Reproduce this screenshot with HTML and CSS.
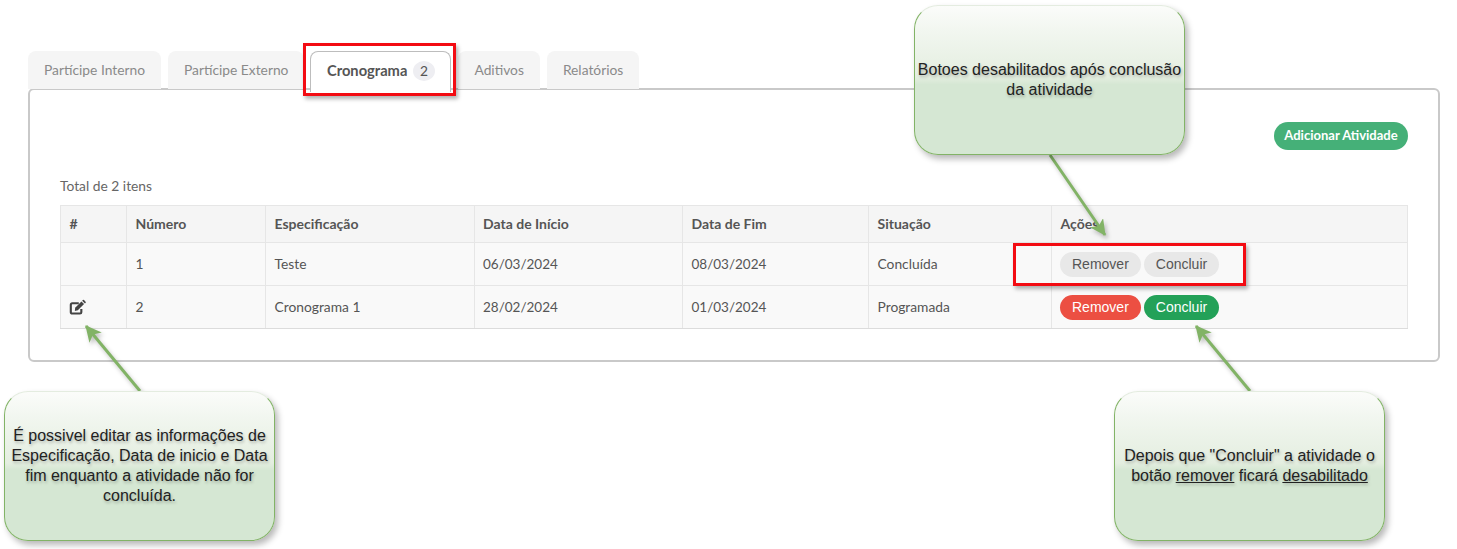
FILE: index.html
```html
<!DOCTYPE html>
<html lang="pt-BR">
<head>
<meta charset="utf-8">
<title>Cronograma</title>
<link rel="stylesheet" href="styles.css">
</head>
<body>
<main class="page">
  <nav class="tabs">
    <a class="tab">Partícipe Interno</a>
    <a class="tab">Partícipe Externo</a>
    <a class="tab tab-active">Cronograma <span class="count">2</span></a>
    <a class="tab">Aditivos</a>
    <a class="tab">Relatórios</a>
  </nav>
  <section class="panel">
    <div class="toolbar"><button class="add">Adicionar Atividade</button></div>
    <p class="total">Total de 2 itens</p>
    <table class="grid">
      <colgroup>
        <col class="c1"><col class="c2"><col class="c3"><col class="c4"><col class="c5"><col class="c6"><col class="c7">
      </colgroup>
      <thead>
        <tr><th>#</th><th>Número</th><th>Especificação</th><th>Data de Início</th><th>Data de Fim</th><th>Situação</th><th>Ações</th></tr>
      </thead>
      <tbody>
        <tr>
          <td></td><td>1</td><td>Teste</td><td class="date">06/03/2024</td><td class="date">08/03/2024</td><td>Concluída</td>
          <td class="actions"><button class="btn off">Remover</button><button class="btn off">Concluir</button></td>
        </tr>
        <tr>
          <td class="edit"><svg class="edit-icon" viewBox="0 0 16 16" aria-hidden="true"><path d="M11.6 9.400v3a1.300 1.300 0 0 1-1.300 1.300H3A1.300 1.300 0 0 1 1.700 12.400V5.300A1.300 1.300 0 0 1 3 4h6.200" fill="none" stroke="currentColor" stroke-width="2"/><path d="M5.800 8.200 11.700 2.300 14.200 4.800 8.300 10.700 5.500 11.200Z" fill="currentColor"/><path d="M12.400 1.600 13 1a.8.8 0 0 1 1.100 0L15.600 2.500a.8.8 0 0 1 0 1.100L15 4.200Z" fill="currentColor"/></svg></td>
          <td>2</td><td>Cronograma 1</td><td class="date">28/02/2024</td><td class="date">01/03/2024</td><td>Programada</td>
          <td class="actions"><button class="btn danger">Remover</button><button class="btn success">Concluir</button></td>
        </tr>
      </tbody>
    </table>
  </section>
</main>

<svg class="arrows" viewBox="0 0 1457 549" aria-hidden="true">
  <defs>
    <marker id="head" markerUnits="userSpaceOnUse" markerWidth="18" markerHeight="18" refX="15" refY="8" orient="auto">
      <path d="M0 0 16 8 0 16 4 8Z" fill="#82b366"/>
    </marker>
  </defs>
  <line x1="1050" y1="155" x2="1105" y2="235" marker-end="url(#head)"/>
  <line x1="140" y1="391" x2="86" y2="326" marker-end="url(#head)"/>
  <line x1="1250" y1="391" x2="1196" y2="326" marker-end="url(#head)"/>
</svg>

<div class="mark mark-tab"></div>
<div class="mark mark-row"></div>

<aside class="note note-top">Botoes desabilitados após conclusão da atividade</aside>
<aside class="note note-left">É possivel editar as informações de Especificação, Data de inicio e Data fim enquanto a atividade não for concluída.</aside>
<aside class="note note-right"><span>Depois que "Concluir" a atividade o botão <u>remover</u> ficará <u>desabilitado</u></span></aside>
</body>
</html>
```
FILE: styles.css
```css
* { box-sizing: border-box; }
html, body { margin: 0; background: #fff; }
body {
  position: relative;
  width: 1457px;
  height: 549px;
  overflow: hidden;
  font-family: Lato, "Liberation Sans", sans-serif;
  font-size: 13.800px;
  color: #555;
}
.page { padding: 51px 17px 0 28px; }

.tabs { display: flex; gap: 7px; height: 38px; }
.tab {
  display: block;
  height: 38px;
  padding: 10px 16px 0;
  background: #f5f5f5;
  border-radius: 8px 8px 0 0;
  color: #8a8a8a;
  font-size: 13.800px;
  line-height: 18px;
  white-space: nowrap;
}
.tab-active {
  position: relative;
  z-index: 1;
  height: 41px;
  margin-left: -1px;
  padding: 9px 15.500px 0;
  background: #fff;
  border: 1px solid #bdbdbd;
  border-bottom: 0;
  color: #555;
  font-size: 14.700px;
  font-weight: 700;
}
.count {
  display: inline-block;
  width: 22px;
  height: 20px;
  margin-left: 2px;
  border-radius: 50%;
  background: #eeeef2;
  font-weight: 400;
  font-size: 13.800px;
  text-align: center;
  line-height: 20px;
}

.panel {
  height: 274px;
  margin-top: -1px;
  padding: 32px 30px 0;
  border: 2px solid #c9c9c9;
  border-radius: 6px;
}
.toolbar { display: flex; justify-content: flex-end; height: 28px; }
.add {
  width: 134px;
  height: 28px;
  padding: 0 0 2px;
  border: 0;
  border-radius: 14px;
  background: #45b078;
  color: #fff;
  font: 700 13px Lato, "Liberation Sans", sans-serif;
}
.total { margin: 27px 0 0; height: 18px; line-height: 18px; color: #666; }

.grid {
  width: 1347px;
  margin-top: 10px;
  border-collapse: collapse;
  table-layout: fixed;
}
.c1 { width: 66px; }
.c2 { width: 139px; }
.c3 { width: 208.500px; }
.c4 { width: 208.500px; }
.c5 { width: 186px; }
.c6 { width: 183px; }
.c7 { width: 356px; }
.grid th, .grid td {
  border: 1px solid #e6e6e6;
  padding: 0 8.500px 2px;
  text-align: left;
}
.grid th { height: 37px; background: #f5f5f5; color: #555; font-size: 14px; font-weight: 700; }
.grid td { height: 43px; background: #f9f9f9; color: #555; font-size: 13.800px; }
.grid td.date { padding-bottom: 0; font-size: 13.500px; }
.grid tbody tr + tr td { border-bottom-color: #dcdcdc; }
.grid td.actions { padding: 0 0 0 8px; white-space: nowrap; }
.grid td.edit { padding: 0 0 0 8px; }
.edit-icon { display: block; width: 17px; height: 17px; color: #444; }

.btn {
  height: 25px;
  margin-right: 3px;
  padding: 0 12px 1px;
  border: 0;
  border-radius: 13px;
  font: 14px "Liberation Sans", Arial, sans-serif;
  vertical-align: middle;
}
.off { background: #e8e8e8; color: #555; }
.danger { background: #ec4f42; color: #fff; }
.success { background: #23a158; color: #fff; }

.arrows { position: absolute; left: 0; top: 0; width: 1457px; height: 549px; pointer-events: none; filter: drop-shadow(2px 3px 2px rgba(0,0,0,.25)); }
.arrows line { stroke: #82b366; stroke-width: 3; }

.mark {
  position: absolute;
  border: 3px solid #f30b12;
  box-shadow: 2px 3px 4px rgba(0,0,0,.3);
}
.mark-tab { left: 303px; top: 43px; width: 153px; height: 53px; }
.mark-row { left: 1013px; top: 243px; width: 233px; height: 43px; }

.note {
  position: absolute;
  display: flex;
  align-items: center;
  justify-content: center;
  width: 271px;
  height: 150px;
  padding: 0;
  border: 1px solid #82b366;
  border-top-color: #e4ece0;
  border-radius: 24px;
  background: linear-gradient(180deg, #fbfcfa 0%, #f1f6ef 18%, #e4eee0 48%, #d5e7d3 53%, #d5e7d3 100%);
  box-shadow: 3px 4px 6px rgba(0,0,0,.28);
  color: #222;
  font: 16px/20px "Liberation Sans", Arial, sans-serif;
  text-align: center;
  text-shadow: 1px 2px 3px rgba(0,0,0,.25);
}
.note-top { left: 914px; top: 5px; }
.note-left { left: 4px; top: 391px; }
.note-right { left: 1114px; top: 391px; }
```
